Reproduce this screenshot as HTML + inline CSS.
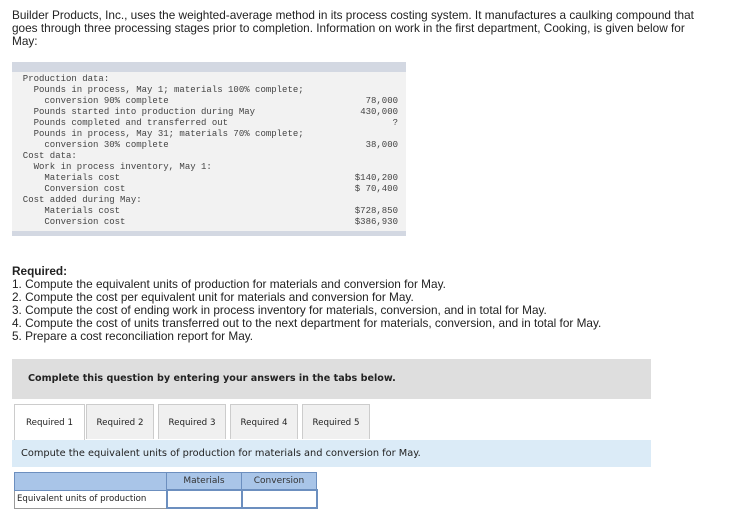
<!DOCTYPE html>
<html><head><style>
body{margin:0;width:732px;height:511px;background:#fff;font-family:"Liberation Sans",sans-serif;color:#222;position:relative;overflow:hidden}
.intro{position:absolute;left:12px;top:9px;width:700px;font-size:11.8px;line-height:13px}
.tbl{position:absolute;left:12px;top:62px;width:394px;background:#f2f2f2}
.bar{height:10px;background:#d3d8e2}
.tbl .r{position:relative;height:11px;font-family:"Liberation Mono",monospace;font-size:9px;line-height:11px;color:#444}
.tbl .r span{position:absolute;right:8px}
.req{position:absolute;left:12px;top:265px;font-size:11.8px;line-height:13px}
.gray{position:absolute;left:12px;top:359px;width:639px;height:40px;background:#dedede;font-weight:bold;line-height:40px;text-indent:16px;font-family:"DejaVu Sans",sans-serif;font-size:9.6px}
.tab{position:absolute;top:404px;height:35px;width:68px;border:1px solid #ccc;border-bottom:none;background:#f0f0f0;line-height:36px;text-align:center;box-sizing:border-box;font-family:"DejaVu Sans",sans-serif;font-size:8.7px}
.band{position:absolute;left:12px;top:440px;width:639px;height:27px;background:#dbebf7;font-family:"DejaVu Sans",sans-serif;font-size:9.8px;line-height:27px;text-indent:9px}
.eq{position:absolute;left:14px;top:472px;border-collapse:collapse;font-family:"DejaVu Sans",sans-serif;font-size:9px}
.eq td{border:1px solid #6c8fbf;padding:0;height:16px}
</style></head><body>
<div class="intro">Builder Products, Inc., uses the weighted-average method in its process costing system. It manufactures a caulking compound that goes through three processing stages prior to completion. Information on work in the first department, Cooking, is given below for May:</div>
<div class="tbl">
<div class="bar"></div>
<div style="height:2px"></div>
<div class="r">&nbsp;&nbsp;Production data:</div>
<div class="r">&nbsp;&nbsp;&nbsp;&nbsp;Pounds in process, May 1; materials 100% complete;</div>
<div class="r">&nbsp;&nbsp;&nbsp;&nbsp;&nbsp;&nbsp;conversion 90% complete<span>78,000</span></div>
<div class="r">&nbsp;&nbsp;&nbsp;&nbsp;Pounds started into production during May<span>430,000</span></div>
<div class="r">&nbsp;&nbsp;&nbsp;&nbsp;Pounds completed and transferred out<span>?</span></div>
<div class="r">&nbsp;&nbsp;&nbsp;&nbsp;Pounds in process, May 31; materials 70% complete;</div>
<div class="r">&nbsp;&nbsp;&nbsp;&nbsp;&nbsp;&nbsp;conversion 30% complete<span>38,000</span></div>
<div class="r">&nbsp;&nbsp;Cost data:</div>
<div class="r">&nbsp;&nbsp;&nbsp;&nbsp;Work in process inventory, May 1:</div>
<div class="r">&nbsp;&nbsp;&nbsp;&nbsp;&nbsp;&nbsp;Materials cost<span>$140,200</span></div>
<div class="r">&nbsp;&nbsp;&nbsp;&nbsp;&nbsp;&nbsp;Conversion cost<span>$ 70,400</span></div>
<div class="r">&nbsp;&nbsp;Cost added during May:</div>
<div class="r">&nbsp;&nbsp;&nbsp;&nbsp;&nbsp;&nbsp;Materials cost<span>$728,850</span></div>
<div class="r">&nbsp;&nbsp;&nbsp;&nbsp;&nbsp;&nbsp;Conversion cost<span>$386,930</span></div>
<div style="height:3px"></div>
<div class="bar" style="height:5px"></div>
</div>
<div class="req"><b>Required:</b><br>1. Compute the equivalent units of production for materials and conversion for May.<br>2. Compute the cost per equivalent unit for materials and conversion for May.<br>3. Compute the cost of ending work in process inventory for materials, conversion, and in total for May.<br>4. Compute the cost of units transferred out to the next department for materials, conversion, and in total for May.<br>5. Prepare a cost reconciliation report for May.</div>
<div class="gray">Complete this question by entering your answers in the tabs below.</div>
<div class="tab" style="left:14px;background:#fff;height:37px;width:71px">Required 1</div>
<div class="tab" style="left:86px">Required 2</div>
<div class="tab" style="left:158px">Required 3</div>
<div class="tab" style="left:230px">Required 4</div>
<div class="tab" style="left:302px">Required 5</div>
<div class="band">Compute the equivalent units of production for materials and conversion for May.</div>
<table class="eq">
<tr style="background:#a9c5e8;color:#333"><td style="width:151px"></td><td style="width:74px;text-align:center">Materials</td><td style="width:74px;text-align:center">Conversion</td></tr>
<tr><td style="border-color:#999;padding-left:2px;height:17px;font-size:8.6px">Equivalent units of production</td><td style="border:2px solid #6c8fbf"></td><td style="border:2px solid #6c8fbf"></td></tr>
</table>
</body></html>
